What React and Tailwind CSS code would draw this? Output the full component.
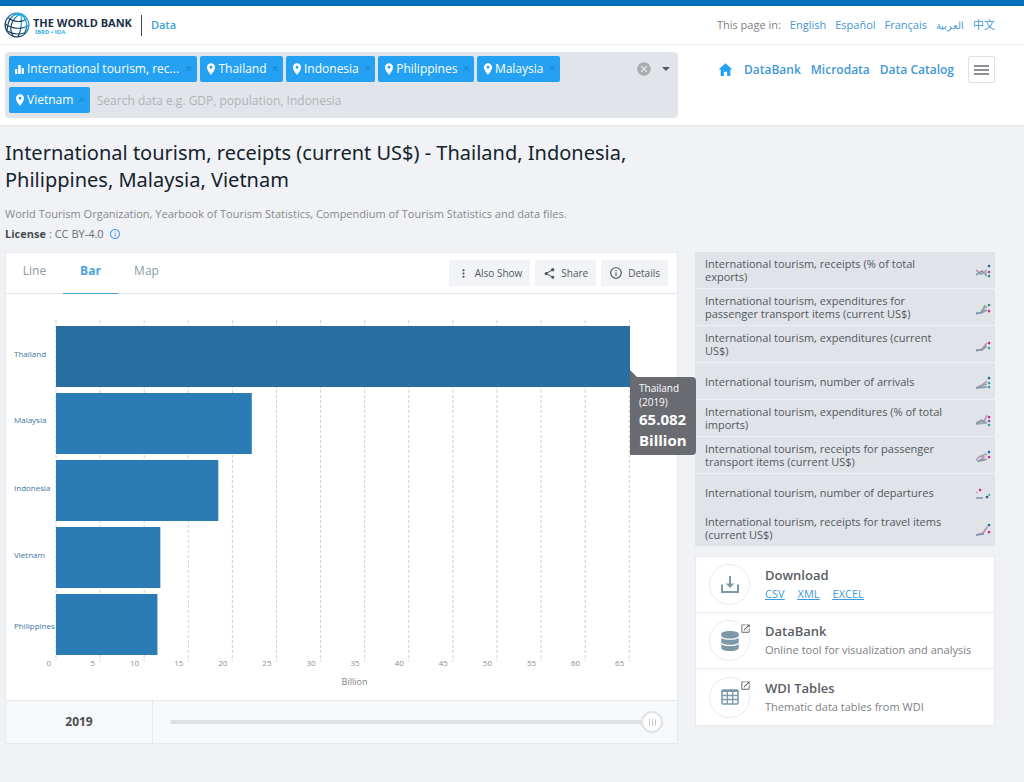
import React, { useState } from "react";
import { MdCancel, MdInfoOutline, MdMoreVert, MdOpenInNew, MdPlace, MdShare } from "react-icons/md";
import { IoMdArrowDropdown, IoMdHome } from "react-icons/io";
import { FaDatabase } from "react-icons/fa";

const languages = [
  { label: "English", code: "en" },
  { label: "Español", code: "es" },
  { label: "Français", code: "fr" },
  { label: "العربية", code: "ar", small: true },
  { label: "中文", code: "zh" },
];

const chips = [
  { label: "International tourism, rec...", kind: "indicator" },
  { label: "Thailand" },
  { label: "Indonesia" },
  { label: "Philippines" },
  { label: "Malaysia" },
  { label: "Vietnam" },
];

const MAX = 65.082;
const bars = [
  { name: "Thailand", value: 65.082, labelY: 37, fill: "#266fa0" },
  { name: "Malaysia", value: 22.2, labelY: 103, fill: "#2b7bb4" },
  { name: "Indonesia", value: 18.4, labelY: 171, fill: "#2b7bb4" },
  { name: "Vietnam", value: 11.83, labelY: 238, fill: "#2b7bb4" },
  { name: "Philippines", value: 11.5, labelY: 309, fill: "#2b7bb4" },
];
const ticks = [0, 5, 10, 15, 20, 25, 30, 35, 40, 45, 50, 55, 60, 65];

const related = [
  {
    label: "International tourism, receipts (% of total exports)",
    lines: ["M0 5 L5 9 L11 5", "M0 10 L6 6 L11 11", "M0 9 L11 8"],
    dots: [[13, 1, "#2a6f97"], [13, 7, "#9a5a8c"], [13, 11, "#3a8f95"]],
  },
  {
    label: "International tourism, expenditures for passenger transport items (current US$)",
    lines: ["M0 12 L6 10 L9 4 L11 6", "M0 11 L5 11 L11 8", "M5 10 L8 5 L8 10"],
    dots: [[13, 3, "#3d8f7a"], [13, 9, "#c2378a"]],
  },
  {
    label: "International tourism, expenditures (current US$)",
    lines: ["M0 12 L6 10 L11 4", "M0 11 L6 11 L11 7"],
    dots: [[13, 4, "#c2378a"], [13, 9, "#4aa59b"]],
  },
  {
    label: "International tourism, number of arrivals",
    lines: ["M0 12 L6 9 L11 5", "M0 12 L11 11", "M3 11 L11 8"],
    dots: [[13, 2, "#2a6f97"], [13, 7, "#3a9f95"], [13, 11, "#3a9f95"]],
  },
  {
    label: "International tourism, expenditures (% of total imports)",
    lines: ["M0 10 L6 7 L8 9 L11 2", "M0 11 L5 8 L11 10", "M0 11 L10 10"],
    dots: [[13, 4, "#c2378a"], [13, 8, "#8a5a9c"], [13, 12, "#3a9f95"]],
  },
  {
    label: "International tourism, receipts for passenger transport items (current US$)",
    lines: ["M0 10 L4 6 L8 7 L3 11 L11 9", "M1 11 L9 10", "M4 7 L9 4 L11 5"],
    dots: [[13, 2, "#2a6f97"], [13, 7, "#c2378a"]],
  },
  {
    label: "International tourism, number of departures",
    lines: ["M0 6 L1 5", "M0 11 L7 11"],
    dots: [[4, 3, "#c2378a"], [13, 8, "#4aa59b"], [11, 10, "#2a5f80"]],
  },
  {
    label: "International tourism, receipts for travel items (current US$)",
    lines: ["M0 12 L7 10 L12 3", "M0 12 L8 11"],
    dots: [[13, 2, "#2a6f97"], [13, 9, "#c2378a"]],
  },
];

const sparkColors = ["#b08fb0", "#7f95ab", "#93a8a8"];

function Globe() {
  return (
    <svg viewBox="0 0 26 26" className="size-[26px]" fill="none" aria-hidden="true">
      <defs>
        <linearGradient id="globe" x1="0" y1="1" x2="1" y2="0">
          <stop offset="0.35" stopColor="#12395c" />
          <stop offset="0.7" stopColor="#1f8fc4" />
          <stop offset="1" stopColor="#2bb5ea" />
        </linearGradient>
      </defs>
      <circle cx="13" cy="13" r="11.8" stroke="url(#globe)" strokeWidth="1.3" />
      <g stroke="url(#globe)" strokeWidth="1.1">
        <path d="M17 1.800 C8 6 4 16 9 24" />
        <path d="M17 1.800 C18 9 18 17 14 24.500" />
        <path d="M17 1.800 C24 8 24 16 20 22" />
        <path d="M17 1.800 C8 2 4 6 3 19" />
        <path d="M4.500 6 C9 10 18 11 23 6.500" />
        <path d="M1.500 12 C8 17 18 18 24.500 13" />
        <path d="M3.500 19 C9 22.500 17 23 22 20" />
      </g>
      <path d="M8 2.500 C12 .8 16 .8 19 2.500 L23 6 L17 4 Z" fill="#29abe2" />
    </svg>
  );
}

function BarsIcon() {
  return (
    <svg viewBox="0 0 9 9" className="h-[9px] w-[9px]" fill="currentColor" aria-hidden="true">
      <rect x="0" y="4" width="2.300" height="5" rx=".5" />
      <rect x="3.200" y="0" width="2.600" height="9" rx=".5" />
      <rect x="6.700" y="3" width="2.300" height="6" rx=".5" />
    </svg>
  );
}

function Spark({ lines, dots }) {
  return (
    <svg viewBox="0 -3 15 17" className="h-[17px] w-[15px]" fill="none" aria-hidden="true">
      {lines.map((d, i) => (
        <path key={d} d={d} stroke={sparkColors[i]} strokeWidth="1.500" />
      ))}
      {dots.map(([x, y, c]) => (
        <g key={`${x}-${y}`}>
          <circle cx={x} cy={y} r="2.200" fill="#f6f8fb" />
          <circle cx={x} cy={y} r="1.500" fill={c} />
        </g>
      ))}
    </svg>
  );
}

function DownloadIcon() {
  return (
    <svg viewBox="0 0 18 18" className="size-[18px]" aria-hidden="true">
      <path d="M1 8.500 V16 H17 V8.500" fill="none" stroke="#7d98a8" strokeWidth="2" />
      <path d="M9 0 V9" stroke="#7d98a8" strokeWidth="2" />
      <path d="M4.800 7.500 H13.200 L9 12 Z" fill="#7d98a8" />
    </svg>
  );
}

function TableIcon() {
  return (
    <svg viewBox="0 0 18 16" className="h-[16px] w-[18px]" fill="none" stroke="#7d98a8" aria-hidden="true">
      <rect x="1" y="1" width="16" height="14" rx="1" strokeWidth="1.500" />
      <path d="M1 2 H17" strokeWidth="2" />
      <path d="M6.300 1 V15 M11.700 1 V15 M1 6.500 H17 M1 10.500 H17" strokeWidth="1.300" />
    </svg>
  );
}

function ToolButton({ icon, children }) {
  return (
    <button type="button" className="flex h-[26px] items-center gap-[5px] bg-[#f1f3f6] px-2 text-[10px] text-[#525860]">
      {icon}
      {children}
    </button>
  );
}

function Chart() {
  return (
    <div className="pt-[26px] pb-[12px]">
      <div className="relative mr-[47px] ml-[50px]">
        <svg className="block h-[353px] w-full overflow-visible" role="img" aria-label="Receipts by country, billion US$">
          {ticks.map((t) => (
            <g key={t}>
              <line
                x1={`${(t / MAX) * 100}%`}
                x2={`${(t / MAX) * 100}%`}
                y1="0"
                y2="341"
                stroke="#cfcfcf"
                strokeDasharray="3 2"
              />
              <text x={`${(t / MAX) * 100}%`} y="346" dx="-5" textAnchor="end" className="fill-[#8b8f94] text-[8px]">
                {t}
              </text>
            </g>
          ))}
          {bars.map((b, i) => (
            <g key={b.name}>
              <rect x="0" y={6 + i * 67} width={`${(b.value / MAX) * 100}%`} height="61" fill={b.fill} />
              <text x="-42" y={b.labelY} className="fill-[#41739e] text-[8px]">
                {b.name}
              </text>
            </g>
          ))}
        </svg>
        <div className="absolute top-[57px] left-full z-10 w-[66px] rounded-r-sm bg-[#696b71] py-1 pl-[9px] text-white">
          <svg viewBox="0 0 7 7" className="absolute -top-[7px] left-0 size-[7px]" aria-hidden="true">
            <path d="M0 0 L7 7 H0 Z" fill="#696b71" />
          </svg>
          <p className="text-[10px] leading-[14px]">
            Thailand
            <br />
            (2019)
          </p>
          <p className="text-[15px] leading-[21px] font-bold">
            65.082
            <br />
            Billion
          </p>
        </div>
      </div>
      <p className="mt-[3px] ml-[26px] text-center text-[9px] leading-[12px] text-[#7b7f85]">Billion</p>
    </div>
  );
}

export default function App() {
  const [tab, setTab] = useState("Bar");
  return (
    <div className="min-h-screen bg-[#f0f2f6] font-['Open_Sans','Noto_Sans_CJK_SC',sans-serif] text-[#525860]">
      <header className="border-b border-[#e6e7ea] bg-white">
        <div className="h-[6px] bg-[#0071bc]" />
        <div className="flex h-[39px] items-center justify-between border-b border-[#eceef1] pr-[29px] pl-1">
          <div className="flex items-center">
            <a href="#home" className="flex items-center gap-[3px]" aria-label="The World Bank">
              <Globe />
              <span className="flex flex-col">
                <span className="text-[11px] leading-[13px] font-bold text-[#1b2f4a]">THE WORLD BANK</span>
                <span className="pl-[2px] text-[6px] leading-[6px] font-bold text-[#35b1e4]">IBRD • IDA</span>
              </span>
            </a>
            <span className="mx-[9px] h-[21px] w-px bg-[#3c4650]" />
            <a href="#data" className="text-[11px] font-semibold text-[#3f9fd9]">Data</a>
          </div>
          <nav className="flex items-center gap-[9px] text-[11px] text-[#4596d4]" aria-label="Languages">
            <span className="text-[#7f8083]">This page in:</span>
            {languages.map((l) => (
              <a key={l.code} href={`#${l.code}`} lang={l.code} className={l.small ? "text-[10px]" : ""}>
                {l.label}
              </a>
            ))}
          </nav>
        </div>
        <div className="flex items-start gap-[17px] pt-[7px] pr-[29px] pb-[7px] pl-[5px]">
          <div className="flex flex-1 items-start rounded-sm bg-[#e1e4e9] px-1 pt-1 pb-[5px]">
            <div className="flex flex-1 flex-wrap gap-x-[3px] gap-y-[5px]">
              {chips.map((c) => (
                <span
                  key={c.label}
                  className={
                    c.kind
                      ? "flex h-[26px] items-center gap-[3px] rounded-xs bg-[#24a1f2] pr-[5px] pl-[6px] text-[12px] text-white"
                      : "flex h-[26px] items-center gap-[2px] rounded-xs bg-[#24a1f2] pr-1 pl-[6px] text-[12px] text-white"
                  }
                >
                  {c.kind ? <BarsIcon /> : <MdPlace className="-mx-[2px] size-[14px]" />}
                  {c.label}
                  <button type="button" aria-label={`Remove ${c.label}`} className="ml-[3px] text-[13px] text-[#1d86cf]">
                    ×
                  </button>
                </span>
              ))}
              <input
                type="text"
                aria-label="Search data"
                placeholder="Search data e.g. GDP, population, Indonesia"
                className="h-[26px] min-w-[260px] flex-1 bg-transparent pl-1 text-[12px] outline-none placeholder:text-[#b1b4b8]"
              />
            </div>
            <div className="flex h-[26px] w-[38px] items-center justify-between">
              <button type="button" aria-label="Clear all">
                <MdCancel className="size-[16px] text-[#aaacaf]" />
              </button>
              <button type="button" aria-label="Open options">
                <IoMdArrowDropdown className="size-[16px] text-[#555a60]" />
              </button>
            </div>
          </div>
          <nav className="flex w-[300px] items-center justify-end pt-1 text-[12px] font-semibold text-[#4098d8]" aria-label="Main">
            <a href="#home" aria-label="Home" className="mr-[10px]">
              <IoMdHome className="size-[17px] text-[#24a1f2]" />
            </a>
            <a href="#databank" className="mr-[10px]">DataBank</a>
            <a href="#microdata" className="mr-[10px]">Microdata</a>
            <a href="#catalog" className="mr-[14px]">Data Catalog</a>
            <button
              type="button"
              aria-label="Menu"
              className="flex h-[27px] w-[27px] flex-col items-center justify-center gap-[2px] rounded-xs border border-[#e0e0e2]"
            >
              <span className="h-[2px] w-[15px] bg-[#8d9094]" />
              <span className="h-[2px] w-[15px] bg-[#8d9094]" />
              <span className="h-[2px] w-[15px] bg-[#8d9094]" />
            </button>
          </nav>
        </div>
      </header>

      <main className="pr-[29px] pb-[38px] pl-[5px]">
        <h1 className="max-w-[673px] pt-[13px] font-['Noto_Sans',sans-serif] text-[20px] leading-[27px] font-normal text-[#15232b]">
          International tourism, receipts (current US$) - Thailand, Indonesia, Philippines, Malaysia, Vietnam
        </h1>
        <p className="mt-[11px] text-[11px] leading-[20px] text-[#87898d]">
          World Tourism Organization, Yearbook of Tourism Statistics, Compendium of Tourism Statistics and data files.
        </p>
        <p className="flex items-center text-[11px] leading-[20px] text-[#6b6e73]">
          <b className="mr-[3px] text-[#4a4d52]">License</b>: CC BY-4.0
          <MdInfoOutline className="ml-[5px] size-[12px] text-[#4c9bea]" />
        </p>

        <div className="mt-[8px] flex items-start gap-[17px]">
          <section className="min-w-0 flex-1 border border-[#e6e9ed] bg-white">
            <div className="flex h-[41px] items-center justify-between border-b border-[#e3e7ea] pr-[9px]">
              <div className="flex h-full" role="tablist">
                {["Line", "Bar", "Map"].map((t) => (
                  <button
                    key={t}
                    type="button"
                    role="tab"
                    aria-selected={tab === t}
                    onClick={() => setTab(t)}
                    className={
                      tab === t
                        ? "-mb-px w-[55px] border-b border-[#4aa3cf] pb-1 text-[12px] font-bold text-[#4aa3e0]"
                        : "w-[57px] pb-1 text-[12px] text-[#8d9aa5]"
                    }
                  >
                    {t}
                  </button>
                ))}
              </div>
              <div className="flex gap-[5px]">
                <ToolButton icon={<MdMoreVert className="size-[13px]" />}>Also Show</ToolButton>
                <ToolButton icon={<MdShare className="size-[13px]" />}>Share</ToolButton>
                <ToolButton icon={<MdInfoOutline className="size-[14px]" />}>Details</ToolButton>
              </div>
            </div>
            <Chart />
            <div className="flex h-[43px] items-stretch border-t border-[#e6e9ec] bg-[#f6f8fa]">
              <label
                htmlFor="year"
                className="flex w-[147px] items-center justify-center border-r border-[#e6e9ec] text-[12px] font-bold text-[#4a4d52]"
              >
                2019
              </label>
              <div className="flex flex-1 items-center pr-[14px] pl-[17px]">
                <input
                  id="year"
                  type="range"
                  min="1995"
                  max="2019"
                  defaultValue="2019"
                  className="h-[4px] w-full appearance-none rounded-full bg-[#dbe0e4] [&::-webkit-slider-thumb]:size-[22px] [&::-webkit-slider-thumb]:appearance-none [&::-webkit-slider-thumb]:rounded-full [&::-webkit-slider-thumb]:border-2 [&::-webkit-slider-thumb]:border-[#dfe2e6] [&::-webkit-slider-thumb]:bg-white [&::-webkit-slider-thumb]:bg-[repeating-linear-gradient(90deg,#c9cbce_0_1px,#fff_1px_3px)] [&::-webkit-slider-thumb]:bg-[length:7px_7px] [&::-webkit-slider-thumb]:bg-center [&::-webkit-slider-thumb]:bg-no-repeat"
                />
              </div>
            </div>
          </section>

          <aside className="w-[300px] shrink-0">
            <ul className="bg-[#e0e3e8] text-[11px] leading-[13px]">
              {related.map((r, i) => (
                <li key={r.label} className={i < 6 ? "border-b border-[#eef0f4]" : ""}>
                  <a href="#indicator" className="flex h-[36px] items-center justify-between pr-[4px] pl-[10px]">
                    <span className="w-[246px]">{r.label}</span>
                    <Spark lines={r.lines} dots={r.dots} />
                  </a>
                </li>
              ))}
            </ul>

            <div className="mt-[10px] divide-y divide-[#e6e8eb] border border-[#e6e9ed] bg-white">
              <div className="flex h-[56px] items-center gap-[15px] pl-[13px]">
                <span className="flex size-[41px] items-center justify-center rounded-full border border-[#e9ebed]">
                  <DownloadIcon />
                </span>
                <div>
                  <h2 className="text-[13px] leading-[19px] font-semibold text-[#5a5e63]">Download</h2>
                  <p className="flex gap-[13px] text-[11px] leading-[18px] text-[#3f9be0] underline">
                    <a href="#csv">CSV</a>
                    <a href="#xml">XML</a>
                    <a href="#excel">EXCEL</a>
                  </p>
                </div>
              </div>
              {[
                {
                  title: "DataBank",
                  text: "Online tool for visualization and analysis",
                  icon: <FaDatabase className="size-[20px] text-[#7d98a8]" />,
                },
                { title: "WDI Tables", text: "Thematic data tables from WDI", icon: <TableIcon /> },
              ].map((row) => (
                <a key={row.title} href="#tool" className="flex h-[56px] items-center gap-[15px] pl-[13px]">
                  <span className="relative flex size-[41px] items-center justify-center rounded-full border border-[#e9ebed]">
                    {row.icon}
                    <MdOpenInNew className="absolute top-[2px] -right-[2px] size-[11px] bg-white text-[#5f6368]" />
                  </span>
                  <span>
                    <span className="block text-[13px] leading-[19px] font-semibold text-[#5a5e63]">{row.title}</span>
                    <span className="block text-[11px] leading-[18px] text-[#7d8085]">{row.text}</span>
                  </span>
                </a>
              ))}
            </div>
          </aside>
        </div>
      </main>
    </div>
  );
}
